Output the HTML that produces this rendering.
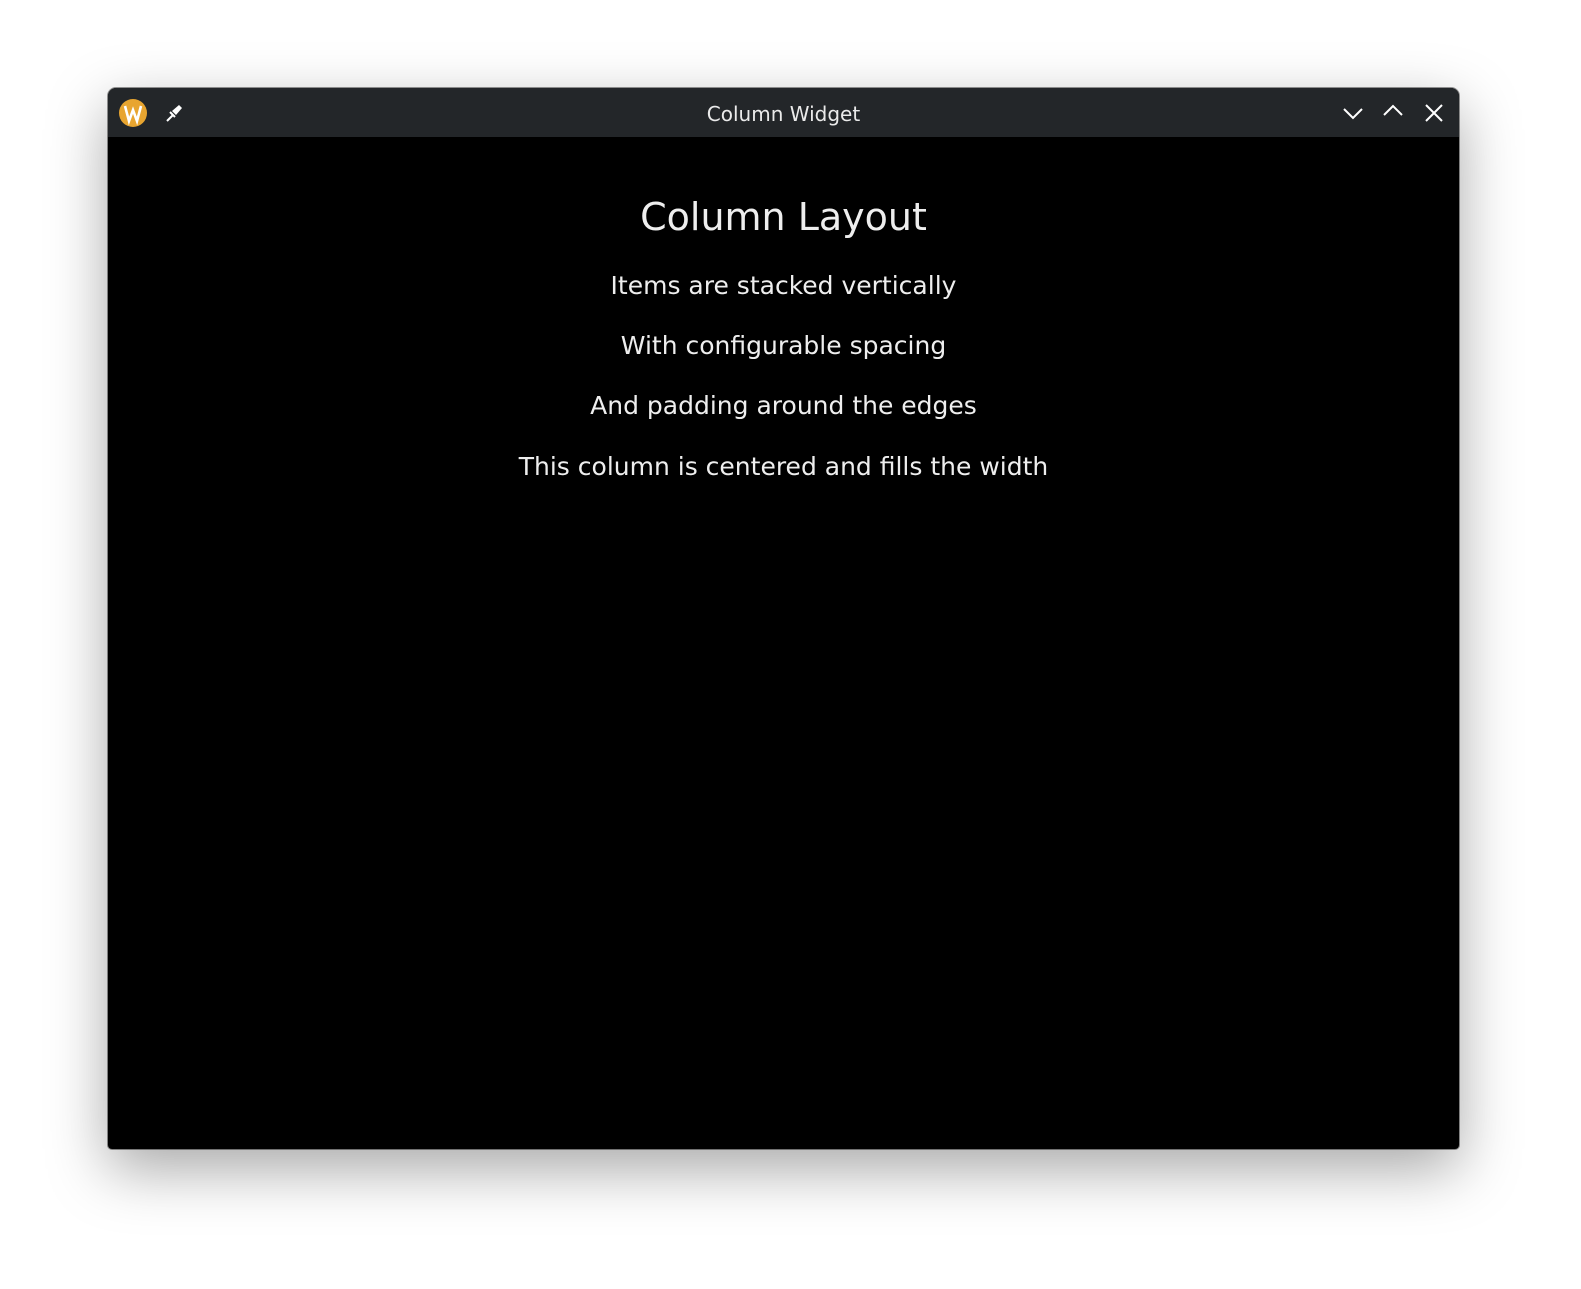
<!DOCTYPE html>
<html><head><style>
html,body{margin:0;padding:0;width:1581px;height:1289px;background:#fff;overflow:hidden}
.win{position:absolute;left:108px;top:88px;width:1351px;height:1061px;background:#000;border-radius:8px 8px 4px 4px;overflow:hidden;box-shadow:0 20px 60px rgba(0,0,0,0.35),0 0 0 1px rgba(0,0,0,0.4)}
.tb{position:absolute;left:0;top:0;width:100%;height:49px;background:#232629;color:#eaeaea;font-family:"DejaVu Sans","Liberation Sans",sans-serif}
.title{position:absolute;left:0;right:0;top:14px;text-align:center;font-size:20px}
.t{position:absolute;left:0;right:0;text-align:center;color:#eeeeee;font-family:"DejaVu Sans","Liberation Sans",sans-serif}
</style></head><body>
<div class="win">
<div class="tb">
<svg style="position:absolute;left:10px;top:10px" width="30" height="30" viewBox="0 0 30 30"><circle cx="15" cy="15" r="14" fill="#e8a530"/><path d="M7 8 L11 23 L15 12 L19 23 L23 8" stroke="#fff" stroke-width="2.6" fill="none" stroke-linejoin="miter"/></svg>
<svg style="position:absolute;left:55px;top:14px" width="22" height="22" viewBox="0 0 22 22"><path d="M4 19 L10 13" stroke="#fff" stroke-width="2"/><path d="M9 9 L13 13 L19 6 L16 3 Z" fill="#fff"/><path d="M7 10 L12 15" stroke="#fff" stroke-width="2"/></svg>
<div class="title">Column Widget</div>
<svg style="position:absolute;left:1234px;top:16px" width="22" height="18" viewBox="0 0 22 18"><path d="M2 5 L11 14 L20 5" stroke="#fff" stroke-width="2" fill="none"/></svg>
<svg style="position:absolute;left:1274px;top:14px" width="22" height="18" viewBox="0 0 22 18"><path d="M2 13 L11 4 L20 13" stroke="#fff" stroke-width="2" fill="none"/></svg>
<svg style="position:absolute;left:1316px;top:15px" width="20" height="20" viewBox="0 0 20 20"><path d="M2 2 L18 18 M18 2 L2 18" stroke="#fff" stroke-width="2"/></svg>
</div>
<div class="t" style="top:107px;font-size:38px">Column Layout</div>
<div class="t" style="top:183px;font-size:25px">Items are stacked vertically</div>
<div class="t" style="top:243px;font-size:25px">With configurable spacing</div>
<div class="t" style="top:303px;font-size:25px">And padding around the edges</div>
<div class="t" style="top:364px;font-size:25px">This column is centered and fills the width</div>
</div>
</body></html>
